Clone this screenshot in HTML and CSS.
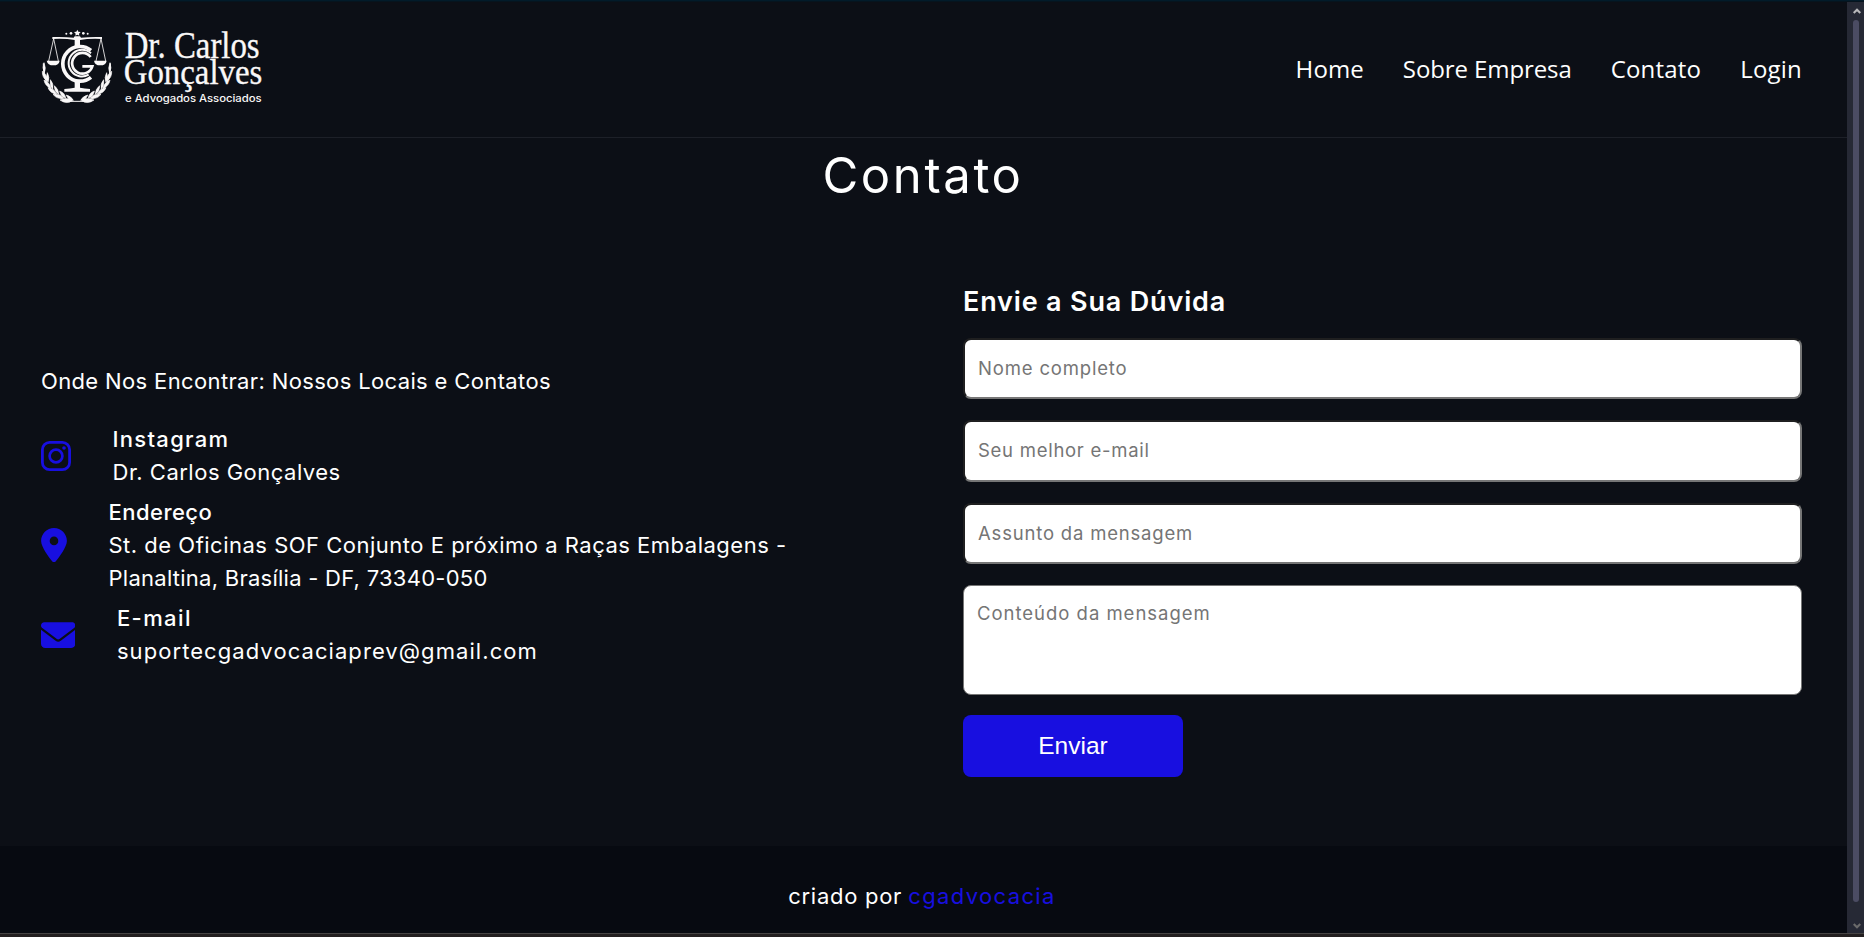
FILE: index.html
```html
<!DOCTYPE html>
<html lang="pt-BR">
<head>
<meta charset="utf-8">
<title>Contato - Dr. Carlos Gonçalves</title>
<link rel="stylesheet" href="styles.css">
</head>
<body>
<div class="edge-top"></div>
<div class="viewport">
  <div class="page">
    <header class="header">
      <svg class="logo" viewBox="63 87 666 228" fill="#faf8f8" role="img" aria-label="Dr. Carlos Gonçalves e Advogados Associados">
        <path d="M172 89l3 6 7 1-5 5 1 6-6-3-6 3 1-6-5-5 7-1z"/>
        <g><circle cx="139" cy="101" r="3"/><circle cx="153" cy="100" r="4"/><circle cx="190" cy="100" r="4"/><circle cx="203" cy="101" r="3"/></g>
        <path d="M97 111q38-1 64 2l3-4h16l3 4q26-3 63-2v6q-38-2-66 3v20h-16v-20q-29-5-67-3z"/>
        <g fill="none" stroke="#faf8f8" stroke-width="2.5"><path d="M101 116L86 183M101 116L115 183M243 116L228 183M243 116L257 183"/></g>
        <path d="M80 182h39q-2 14-19 14t-20-14zM222 182h38q-2 14-19 14t-19-14z"/>
        <g fill="none" stroke="#faf8f8">
          <path stroke-width="11" d="M213 151A52 52 0 1 0 213 232"/>
          <path stroke-width="6" d="M213 160A40 40 0 1 0 206 224"/>
          <path stroke-width="8" d="M212 171A31 31 0 1 0 217 199H187"/>
        </g>
        <path d="M164 241h16v22q14 3 30 4v8h-77v-8q18-1 31-4z"/>
        <g fill="none" stroke="#faf8f8" stroke-width="3"><path d="M70 190C68 247 98 296 153 304L190 304C242 296 273 250 271 190"/></g>
        <g id="leaves" stroke="#faf8f8" stroke-width="2">
          <path d="M72 188q7 16 1 31q-7-15-1-31zM67 214q15 10 14 29q-15-11-14-29zM82 218q8 14 2 29q-8-13-2-29zM72 240q17 7 21 25q-18-7-21-25zM91 239q11 12 7 29q-10-13-7-29zM84 263q19 3 26 19q-19-1-26-19zM103 257q13 10 13 26q-14-10-13-26zM99 283q21-3 32 11q-19 5-32-11zM119 273q16 6 18 21q-16-5-18-21zM120 300q20-10 37 2q-18 12-37-2zM139 285q15 4 21 16q-16 0-21-16z"/>
        </g>
        <use href="#leaves" transform="matrix(-1 0 0 1 342 0)"/>
        <g class="logo-serif">
          <text x="314" y="173" font-size="112" textLength="405" lengthAdjust="spacingAndGlyphs">Dr. Carlos</text>
          <text x="311" y="252" font-size="108" textLength="416" lengthAdjust="spacingAndGlyphs">Gonçalves</text>
        </g>
        <text class="logo-sub" x="315" y="305" font-size="29" textLength="410" lengthAdjust="spacingAndGlyphs">e Advogados Associados</text>
      </svg>
      <nav class="nav">
        <a class="nav-home">Home</a>
        <a class="nav-about">Sobre Empresa</a>
        <a class="nav-contact">Contato</a>
        <a class="nav-login">Login</a>
      </nav>
    </header>

    <main class="main">
      <h1 class="title">Contato</h1>
      <div class="columns">
        <section class="info">
          <p class="lead">Onde Nos Encontrar: Nossos Locais e Contatos</p>
          <div class="item">
            <svg class="icon" width="30" height="30" viewBox="0 0 30 30" fill="none" stroke="#180fe0"><rect x="1.4" y="1.4" width="27.2" height="27.2" rx="7.2" stroke-width="2.8"/><circle cx="15" cy="15" r="6.4" stroke-width="2.7"/><circle cx="23" cy="7" r="1.8" fill="#180fe0" stroke="none"/></svg>
            <div class="detail detail-instagram"><h3>Instagram</h3><p>Dr. Carlos Gonçalves</p></div>
          </div>
          <div class="item">
            <svg class="icon" width="26" height="34.4" viewBox="0 0 384 512" fill="#180fe0"><path d="M215.700 499.200C267 435 384 279.400 384 192C384 86 298 0 192 0S0 86 0 192c0 87.400 117 243 168.300 307.200c12.300 15.300 35.100 15.300 47.400 0zM192 128a64 64 0 1 1 0 128 64 64 0 1 1 0-128z"/></svg>
            <div class="detail detail-address"><h3>Endereço</h3><p>St. de Oficinas SOF Conjunto E próximo a Raças Embalagens -</p><p class="address-end">Planaltina, Brasília - DF, 73340-050</p></div>
          </div>
          <div class="item">
            <svg class="icon icon-mail" width="34.400" height="34.400" viewBox="0 0 512 512" fill="#180fe0"><path d="M48 64C21.500 64 0 85.500 0 112c0 15.100 7.100 29.300 19.200 38.400L236.800 313.600c11.400 8.500 27 8.500 38.400 0L492.800 150.400c12.100-9.100 19.200-23.300 19.200-38.400c0-26.500-21.500-48-48-48H48zM0 176V384c0 35.300 28.700 64 64 64H448c35.300 0 64-28.700 64-64V176L294.400 339.200c-22.800 17.100-54 17.100-76.800 0L0 176z"/></svg>
            <div class="detail detail-email"><h3>E-mail</h3><p>suportecgadvocaciaprev@gmail.com</p></div>
          </div>
        </section>

        <form class="form">
          <h2 class="form-title">Envie a Sua Dúvida</h2>
          <input class="field field-name" type="text" placeholder="Nome completo">
          <input class="field field-email" type="email" placeholder="Seu melhor e-mail">
          <input class="field field-subject" type="text" placeholder="Assunto da mensagem">
          <textarea class="message" placeholder="Conteúdo da mensagem"></textarea>
          <button class="send" type="button">Enviar</button>
        </form>
      </div>
    </main>

    <footer class="footer">
      <p><span class="by">criado por</span> <a class="brand">cgadvocacia</a></p>
    </footer>
  </div>

  <div class="scrollbar">
    <svg width="8" height="6" viewBox="0 0 8 6" fill="none" stroke="#b9b9bb" stroke-width="2.2"><path d="M.7 5L4 1.800L7.300 5"/></svg>
    <div class="thumb"></div>
    <svg width="8" height="6" viewBox="0 0 8 6" fill="none" stroke="#6b6b6b" stroke-width="2.200"><path d="M.7 1L4 4.200L7.300 1"/></svg>
  </div>
</div>
<div class="edge-bottom"></div>
</body>
</html>
```
FILE: styles.css
```css
* { box-sizing: border-box; margin: 0; padding: 0; }

body {
  height: 937px;
  display: flex;
  flex-direction: column;
  overflow: hidden;
  background: #0c0f16;
  color: #fff;
  font: 400 22px/33px Inter, sans-serif;
}

.edge-top { height: 2px; background: linear-gradient(#021b2a 50%, #06141e 50%); }
.edge-bottom { height: 4px; background: #231f20; border-top: 1px solid #464444; }

.viewport { flex: 1; display: flex; min-height: 0; }
.page { flex: 1; display: flex; flex-direction: column; }

/* Header */
.header {
  height: 136px;
  padding: 0 45px 0 41px;
  display: flex;
  align-items: center;
  justify-content: space-between;
  border-bottom: 1px solid #1d2028;
}
.logo { width: 222px; height: 76px; margin-top: -5px; }
.logo-serif { font-family: "Liberation Serif", serif; stroke: #faf8f8; stroke-width: 1; }
.logo-sub { font-family: Inter, sans-serif; font-weight: 500; }

.nav { display: flex; gap: 39px; margin-top: -2px; font: 500 24px/36px "Open Sans", sans-serif; }
.nav-home { letter-spacing: .1px; }
.nav-about { letter-spacing: -.1px; }
.nav-contact { letter-spacing: .2px; }
.nav-login { letter-spacing: .2px; }

/* Contact section */
.main { height: 708px; padding: 2px 45px 0 41px; }
.title {
  text-align: center;
  text-indent: 3px;
  font-size: 49px;
  font-weight: 400;
  line-height: 72px;
  letter-spacing: 2.600px;
}
.columns {
  display: grid;
  grid-template-columns: 1fr 839px;
  column-gap: 83px;
  margin-top: 68px;
}

.info { padding-top: 85px; }
.lead { letter-spacing: .36px; margin-bottom: 24.5px; }
.item { display: flex; align-items: center; margin-bottom: 7px; }
.item h3 { font-size: 22px; font-weight: 500; }
.icon { flex: none; }
.icon-mail { margin-top: 1px; }
.detail { margin-left: 41.500px; white-space: nowrap; letter-spacing: .5px; }
.detail-instagram h3 { letter-spacing: 1.300px; }
.detail-address h3 { letter-spacing: .47px; }
.detail-address .address-end { letter-spacing: .26px; }
.detail-email h3 { letter-spacing: 1.400px; }
.detail-email p { letter-spacing: 1.070px; }

/* Form */
.form { display: flex; flex-direction: column; padding-top: 1px; }
.form-title {
  font-size: 27px;
  font-weight: 600;
  line-height: 42px;
  letter-spacing: .83px;
  margin-bottom: 14.500px;
}
.field, .message {
  width: 100%;
  background: #fff;
  border-radius: 8px;
  font: 400 18.500px/28px Inter, sans-serif;
}
.field {
  height: 61.600px;
  margin-bottom: 21px;
  padding: 0 13px 1px;
  border: 2px solid;
  border-color: #1f1f20 #767676 #767676 #1f1f20;
}
.field::placeholder, .message::placeholder { color: #757575; }
.field-name { letter-spacing: .83px; }
.field-email { letter-spacing: .73px; }
.field-subject { letter-spacing: .81px; }
.message {
  height: 110px;
  padding: 12.500px 13px;
  border: 1px solid #767676;
  resize: none;
  letter-spacing: .98px;
}
.send {
  width: 220px;
  height: 62px;
  margin-top: 20px;
  border: 0;
  border-radius: 8px;
  background: #180fe0;
  color: #fff;
  font: 400 24.500px "Liberation Sans", Arial, sans-serif;
}

/* Footer */
.footer {
  flex: 1;
  padding: 34px 45px 0 42px;
  background: #070a11;
  text-align: center;
}
.by { letter-spacing: .72px; }
.brand { color: #180fe0; letter-spacing: 1.360px; }

/* Scrollbar */
.scrollbar {
  width: 17px;
  padding: 6px 0 4px 6px;
  display: flex;
  flex-direction: column;
  align-items: flex-start;
  background: #262935;
}
.scrollbar svg { flex: none; }
.thumb {
  flex: 1;
  width: 6px;
  margin: 6px 0 21px;
  border-radius: 3px;
  background: #4b4c63;
}
```
